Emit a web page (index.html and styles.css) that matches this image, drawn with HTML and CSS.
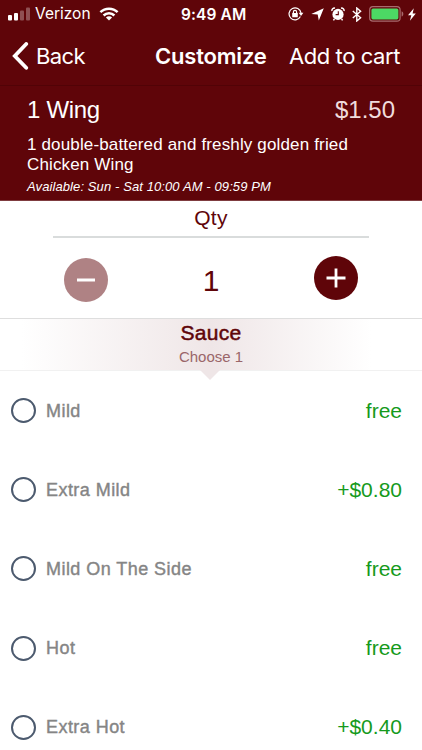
FILE: index.html
```html
<!DOCTYPE html>
<html lang="en">
<head>
  <meta charset="UTF-8">
  <meta name="viewport" content="width=device-width, initial-scale=1.0">
  <title>Customize</title>
  <link rel="stylesheet" href="styles.css">
</head>
<body>
  <header class="top">
    <div class="status">
      <div class="status-left">
        <svg class="signal" width="22" height="14" viewBox="0 0 22 14" fill="#fff">
          <rect x="0" y="8" width="4" height="5.5" rx="1"/>
          <rect x="6" y="6" width="4" height="7.5" rx="1"/>
          <rect x="12" y="3.5" width="4" height="10" rx="1" opacity=".3"/>
          <rect x="18" y=".5" width="4" height="13" rx="1" opacity=".3"/>
        </svg>
        <span class="carrier">Verizon</span>
        <svg width="20" height="14" viewBox="0 0 20 14" fill="none" stroke="#fff" stroke-width="2.5">
          <path d="M1.4 5.2a12.2 12.2 0 0 1 17.2 0"/>
          <path d="M4.6 8.5a7.6 7.6 0 0 1 10.8 0"/>
          <path d="M10 13.6 6.9 10.5a4.4 4.4 0 0 1 6.2 0z" fill="#fff" stroke="none"/>
        </svg>
      </div>
      <span class="clock">9:49 AM</span>
      <div class="status-right">
        <svg width="16" height="14" viewBox="0 0 16 14" fill="none" stroke="#fff" stroke-width="1.2">
          <path d="M12.4 9.6A6 6 0 1 1 13 6"/>
          <path d="M10.7 5.8h4.7L13 8.9z" fill="#fff" stroke="none"/>
          <rect x="4.2" y="6" width="5.6" height="4.3" rx=".5" fill="#fff" stroke="none"/>
          <path d="M5.4 6.5V5a1.6 1.6 0 0 1 3.2 0v1.5"/>
        </svg>
        <svg width="13" height="13" viewBox="0 0 13 13" fill="#fff">
          <path d="M12.8.3 7.8 12.6 6.7 6.6.3 6z"/>
        </svg>
        <svg width="14" height="14" viewBox="0 0 14 14" fill="#fff">
          <circle cx="7" cy="7.4" r="5.6"/>
          <path d="M3.4 12 2.4 13.4M10.6 12l1 1.4M1 4C.6 2.2 2.2.8 4 1.2M13 4C13.4 2.2 11.8.8 10 1.2" fill="none" stroke="#fff" stroke-width="1.5"/>
          <path d="M4.6 7.6H7.3V4.3" fill="none" stroke="#5f0509" stroke-width="1.1"/>
        </svg>
        <svg width="10" height="15" viewBox="0 0 10 15" fill="none" stroke="#fff" stroke-width="1.4">
          <path d="M.8 4 8.6 10.8 4.8 14V1L8.6 4.2.8 11"/>
        </svg>
        <svg class="battery" width="35" height="16" viewBox="0 0 35 16">
          <rect x=".7" y=".7" width="30.4" height="14.4" rx="3.2" fill="none" stroke="#a86a6d" stroke-width="1.2"/>
          <rect x="2.4" y="2.4" width="27" height="11" rx="1.6" fill="#4cd964"/>
          <path d="M32.6 5.2c2.3.9 2.3 4.5 0 5.4z" fill="#a86a6d"/>
        </svg>
        <svg class="bolt" width="8" height="13" viewBox="0 0 8 13" fill="#fff">
          <path d="M5.8.3 0 7.2h3.3L1.9 12.7 7.8 5.6H4.6z"/>
        </svg>
      </div>
    </div>
    <nav class="nav">
      <a class="back">
        <svg width="17" height="28" viewBox="0 0 17 28" fill="none" stroke="#fff" stroke-width="3.8" stroke-linecap="round" stroke-linejoin="miter">
          <path d="M14.2 2 2.8 14l11.4 11.8"/>
        </svg>
        <span>Back</span>
      </a>
      <h1 class="title">Customize</h1>
      <a class="add">Add to cart</a>
    </nav>
  </header>

  <section class="item">
    <div class="item-head">
      <span class="item-name">1 Wing</span>
      <span class="item-price">$1.50</span>
    </div>
    <p class="item-desc">1 double-battered and freshly golden fried<br>Chicken Wing</p>
    <p class="item-hours">Available: Sun - Sat 10:00 AM - 09:59 PM</p>
  </section>

  <section class="qty">
    <h2 class="qty-title">Qty</h2>
    <div class="stepper">
      <button class="round minus">
        <svg width="20" height="20" viewBox="0 0 20 20"><path d="M1 10h18" stroke="#fff" stroke-width="3"/></svg>
      </button>
      <span class="count">1</span>
      <button class="round plus">
        <svg width="20" height="20" viewBox="0 0 20 20"><path d="M.5 10h19M10 .5v19" stroke="#fff" stroke-width="2.8"/></svg>
      </button>
    </div>
  </section>

  <section class="group">
    <h2 class="group-title">Sauce</h2>
    <p class="group-hint">Choose 1</p>
  </section>

  <ul class="options">
    <li class="option"><i class="radio"></i><span class="label">Mild</span><span class="price">free</span></li>
    <li class="option"><i class="radio"></i><span class="label">Extra Mild</span><span class="price">+$0.80</span></li>
    <li class="option"><i class="radio"></i><span class="label">Mild On The Side</span><span class="price">free</span></li>
    <li class="option"><i class="radio"></i><span class="label">Hot</span><span class="price">free</span></li>
    <li class="option"><i class="radio"></i><span class="label">Extra Hot</span><span class="price">+$0.40</span></li>
  </ul>
</body>
</html>
```
FILE: styles.css
```css
* {
  box-sizing: border-box;
}
body {
  margin: 0;
  height: 750px;
  overflow: hidden;
  background: #fff;
  font-family: "Liberation Sans", Arial, sans-serif;
}
h1, h2, p, ul {
  margin: 0;
  padding: 0;
  font-weight: normal;
}
svg {
  display: block;
  flex: none;
}
.top {
  height: 85px;
  background: #5f0509;
  color: #fff;
  font-family: Inter, sans-serif;
}
.status {
  display: grid;
  grid-template-columns: 173px auto 1fr;
  align-items: center;
  height: 28px;
  padding: 0 6px 0 8px;
}
.status-left, .status-right {
  display: flex;
  align-items: center;
}
.carrier {
  margin: 0 8px 0 5px;
  font-size: 15.5px;
  line-height: 20px;
}
.clock {
  font-size: 15.5px;
  font-weight: 600;
  letter-spacing: 0.1px;
}
.status-right {
  justify-content: flex-end;
  gap: 7px;
}
.bolt {
  margin-left: -3px;
}
.nav {
  display: grid;
  grid-template-columns: 143px 1fr auto;
  align-items: center;
  height: 55px;
  padding: 0 22px 0 12px;
  font-size: 22px;
}
.back {
  display: flex;
  align-items: center;
  gap: 7px;
  letter-spacing: -0.6px;
}
.title {
  font-size: 22px;
  font-weight: 600;
  letter-spacing: -0.2px;
}
.add {
  letter-spacing: -0.42px;
}
.item {
  height: 116px;
  padding: 10px 27px 0;
  background: #5f0509;
  border-top: 1px solid #510306;
  border-bottom: 1px solid #7f3c40;
  color: #fff;
}
.item-head {
  display: flex;
  justify-content: space-between;
  font-size: 24px;
  line-height: 28px;
}
.item-name {
  letter-spacing: -0.3px;
}
.item-price {
  color: #f0dcdd;
}
.item-desc {
  margin-top: 11px;
  font-size: 17px;
  line-height: 20px;
  letter-spacing: 0.15px;
}
.item-hours {
  margin-top: 4px;
  font-size: 13px;
  font-style: italic;
  line-height: 16px;
  letter-spacing: 0.1px;
}
.qty {
  height: 117px;
  padding: 0 53px;
  color: #5f0509;
}
.qty-title {
  height: 37px;
  border-bottom: 2px solid #d9dcdc;
  font-size: 21px;
  line-height: 34px;
  letter-spacing: 0.3px;
  text-align: center;
}
.stepper {
  display: flex;
  justify-content: space-between;
  align-items: flex-start;
  padding: 18px 11px 0;
}
.round {
  display: flex;
  align-items: center;
  justify-content: center;
  width: 44px;
  height: 44px;
  padding: 0;
  border: 0;
  border-radius: 50%;
  background: #5f0509;
}
.minus {
  margin-top: 2px;
  background: #af8284;
}
.count {
  padding-top: 5px;
  font-size: 30px;
  line-height: 40px;
}
.group {
  position: relative;
  height: 53px;
  border-top: 1px solid #dedede;
  border-bottom: 1px solid #f1f1f1;
  background: linear-gradient(90deg, #fff 5%, #efe6e7 50%, #fff 88%);
  color: #5f0509;
  text-align: center;
}
/* small pointer under the group header */
.group::after {
  content: "";
  position: absolute;
  top: 51px;
  left: 200px;
  border: 10px solid transparent;
  border-top-color: #efe6e7;
  border-bottom: 0;
}
.group-title {
  font-size: 21px;
  line-height: 28px;
  letter-spacing: 0.3px;
  -webkit-text-stroke: 0.5px #5f0509;
}
.group-hint {
  font-size: 15px;
  line-height: 20px;
  color: #9a6669;
}
.options {
  list-style: none;
}
.option {
  display: flex;
  align-items: center;
  height: 79.2px;
  padding: 0 20px 0 11px;
}
.radio {
  width: 25px;
  height: 25px;
  margin-right: 10px;
  border: 2px solid #4c5a6e;
  border-radius: 50%;
}
.label {
  flex: 1;
  padding-top: 1px;
  color: #858585;
  font-size: 18px;
  letter-spacing: 0.45px;
  -webkit-text-stroke: 0.4px #858585;
}
.price {
  color: #159a1c;
  font-size: 21px;
}
```
